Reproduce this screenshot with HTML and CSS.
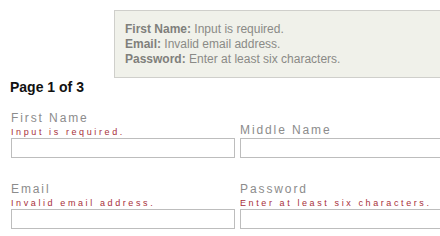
FILE: index.html
```html
<!DOCTYPE html>
<html>
<head>
<meta charset="utf-8">
<link rel="stylesheet" href="styles.css">
</head>
<body>
<div class="summary">
  <div class="line"><b>First Name:</b> Input is required.</div>
  <div class="line"><b>Email:</b> Invalid email address.</div>
  <div class="line"><b>Password:</b> Enter at least six characters.</div>
</div>
<h1 class="title">Page 1 of 3</h1>
<div class="grid">
  <div class="field">
    <label class="label">First Name</label>
    <div class="error">Input is required.</div>
    <input class="input" type="text">
  </div>
  <div class="field edge">
    <label class="label">Middle Name</label>
    <input class="input" type="text">
  </div>
  <div class="field">
    <label class="label">Email</label>
    <div class="error">Invalid email address.</div>
    <input class="input" type="text">
  </div>
  <div class="field edge">
    <label class="label">Password</label>
    <div class="error">Enter at least six characters.</div>
    <input class="input" type="password">
  </div>
</div>
</body>
</html>
```
FILE: styles.css
```css
html, body {
  margin: 0;
  padding: 0;
  background: #fff;
  font-family: "Liberation Sans", Arial, sans-serif;
  overflow: hidden;
}
.summary {
  margin: 10px 0 0 114px;
  height: 65px;
  background: #f0f1ea;
  border: 1px solid #cfcfcb;
  border-right: none;
  padding: 1px 0 0 10px;
  box-sizing: content-box;
  display: flex;
  flex-direction: column;
  justify-content: center;
  color: #8a8a86;
  font-size: 12px;
  line-height: 15px;
}
.summary b {
  color: #7f7f7b;
}
.title {
  margin: 1px 0 0 10px;
  font-size: 14px;
  line-height: 16px;
  font-weight: bold;
  color: #111;
}
.grid {
  display: grid;
  grid-template-columns: 224px 1fr;
  column-gap: 5px;
  row-gap: 24px;
  margin: 16px 0 0 11px;
  align-items: end;
}
.field {
  display: flex;
  flex-direction: column;
}
.label {
  font-size: 12px;
  line-height: 15px;
  letter-spacing: 1.9px;
  color: #8c8c8c;
}
.error {
  font-size: 9px;
  line-height: 12px;
  letter-spacing: 2.6px;
  color: #a8303a;
}
.input {
  margin: 0;
  height: 20px;
  box-sizing: border-box;
  border: 1px solid #bdbdbd;
  background: #fff;
  padding: 0;
}
.edge .input {
  border-right: none;
}
```
